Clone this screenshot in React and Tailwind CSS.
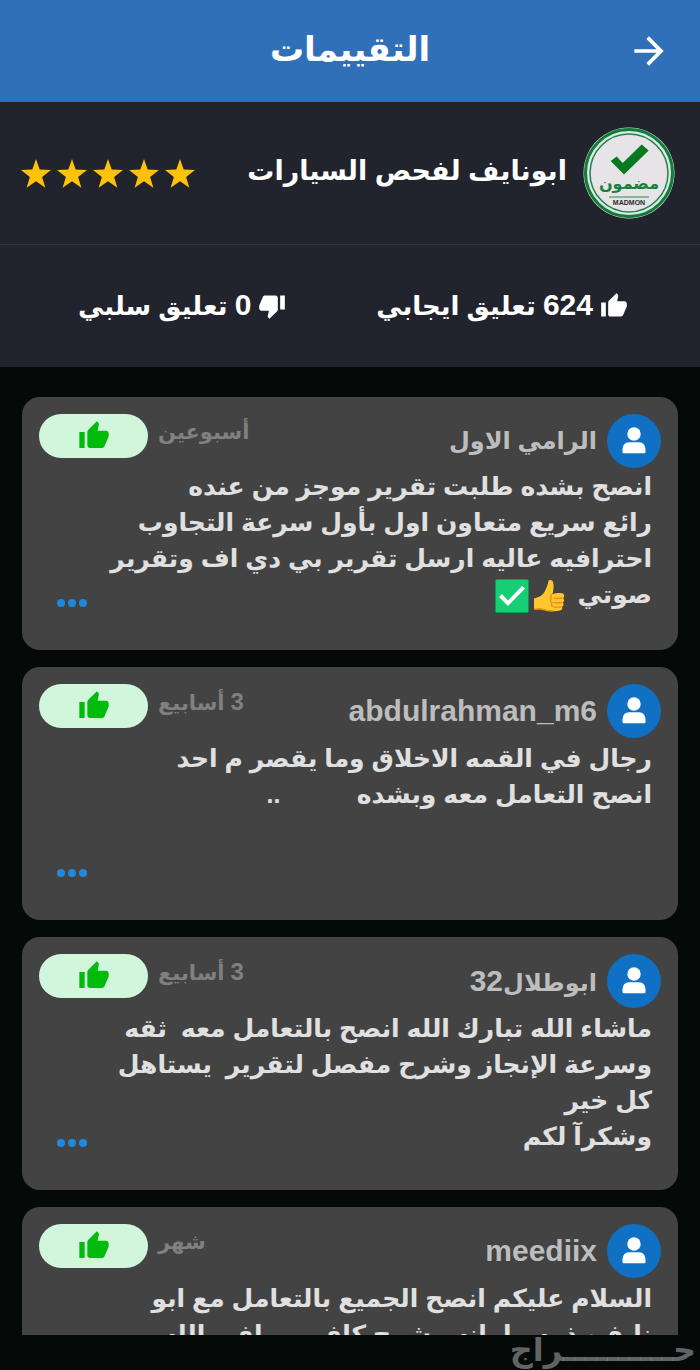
import { MdArrowForward, MdThumbDown, MdThumbUp } from 'react-icons/md'

const reviews = [
  {
    id: 1,
    name: 'الرامي الاول',
    time: 'أسبوعين',
    lines: [
      'انصح بشده طلبت تقرير موجز من عنده',
      'رائع سريع متعاون اول بأول سرعة التجاوب',
      'احترافيه عاليه ارسل تقرير بي دي اف وتقرير',
      'صوتي',
    ],
    emojis: true,
  },
  {
    id: 2,
    name: 'abdulrahman_m6',
    time: '3 أسابيع',
    lines: [
      'رجال في القمه الاخلاق وما يقصر م احد',
      'انصح التعامل معه وبشده           ..',
    ],
  },
  {
    id: 3,
    name: 'ابوطلال32',
    time: '3 أسابيع',
    lines: [
      'ماشاء الله تبارك الله انصح بالتعامل معه  ثقه',
      'وسرعة الإنجاز وشرح مفصل لتقرير  يستاهل',
      'كل خير',
      'وشكرآ لكم',
    ],
  },
  {
    id: 4,
    name: 'meediix',
    time: 'شهر',
    lines: [
      'السلام عليكم انصح الجميع بالتعامل مع ابو',
      'نايف، ذمه وامانه وشرح كافي ووافي الله',
    ],
  },
]

// Latin letters and digits are set larger than the Arabic around them
function MixedText({ text, latinClass }) {
  return text.split(/([\w]+)/).map((part, i) =>
    i % 2 === 1 ? (
      <span key={i} className={latinClass}>
        {part}
      </span>
    ) : (
      part
    )
  )
}

function MadmonLogo() {
  return (
    <svg viewBox="0 0 92 92" className="size-[92px] shrink-0" role="img" aria-label="مضمون">
      <circle cx="46" cy="46" r="45.500" fill="#d5efdf" />
      <circle cx="46" cy="46" r="43.500" fill="none" stroke="#167a3c" strokeWidth="3" />
      <circle cx="46" cy="46" r="39" fill="#e6e4e6" stroke="#2c7c52" strokeWidth="1.500" />
      <path d="M27.700 34l6-4.500 6 6.500 19-18.500 7 6-24.700 24z" fill="#08791f" />
      <text
        x="46"
        y="62"
        textAnchor="middle"
        direction="rtl"
        fill="#16803c"
        className="font-['DejaVu_Sans',sans-serif] text-[16px] font-bold"
      >
        مضمون
      </text>
      <path d="M26 70h40" stroke="#2c8a50" strokeWidth="1" />
      <text
        x="46"
        y="78"
        textAnchor="middle"
        fill="#2a2a2a"
        className="font-['Liberation_Sans',sans-serif] text-[7px] font-bold"
      >
        MADMON
      </text>
    </svg>
  )
}

function Star() {
  return (
    <svg viewBox="0 0 30 29" className="w-[30px]" aria-hidden="true">
      <path
        d="M15 0l3.700 10.600 11.300.4-8.900 6.900 3.300 10.800L15 22.300l-9.400 6.400 3.300-10.800L0 11l11.300-.4z"
        fill="#ffc10a"
      />
    </svg>
  )
}

function Avatar() {
  return (
    <span className="flex size-[54px] shrink-0 items-center justify-center rounded-full bg-[#1070c4]">
      <svg viewBox="0 0 24 28" className="w-6" fill="#fff" aria-hidden="true">
        <circle cx="12" cy="7" r="6.700" />
        <path d="M.5 23.500C.5 18 3 15.200 7 15.200h10c4 0 6.500 2.800 6.500 8.300v1.500q0 1.200-1.200 1.200H1.700Q.5 26.200.5 25z" />
      </svg>
    </span>
  )
}

function Emojis() {
  return (
    <span className="ms-3 inline-flex h-[34px] gap-1 align-middle">
      <svg viewBox="0 0 32 34" className="w-8" role="img" aria-label="👍">
        <path
          d="M1 19.500c5-1.500 9-3 11-7.500 1.500-3.500 3-6.500 3.500-10C16 .5 19 .5 20 3c1.200 3.500.6 8-.5 12 3-1.200 9-1.500 10.500-.5 1.800 1.300 1.500 3.700 0 4.500 1.500 1.200 1.300 3.700-.2 4.500 1.200 1.300 1 3.500-.8 4.300.8 1.700 0 3.500-2 3.800-4 .8-10 .8-14-.6-3-1-5-1.500-7-1.200-2 .2-4 .2-5 .2z"
          fill="#ffc62e"
        />
        <path
          d="M29.500 19c-3 .6-6 .6-9 .2M29.500 23.500c-3 .6-6 .6-9 .2M28.500 27.800c-3 .4-5 .4-8 .2M19.500 15c-2 1-2.500 3-1 4.500-1.500 1.500-1 3.500.5 4.300-1 1.500-.5 3.500 1 4.200"
          fill="none"
          stroke="#e8901c"
          strokeWidth="1.300"
        />
        <path d="M1 30c3 .5 5-.5 8 .4 3 1 7 1.700 11 1.600" fill="none" stroke="#e8901c" strokeWidth="1.500" />
      </svg>
      <svg viewBox="0 0 34 34" className="w-[34px]" role="img" aria-label="✅">
        <rect x=".5" y=".5" width="33" height="33" rx="1.500" fill="#16cf74" stroke="#0b9a52" />
        <path d="M4 18l3-3 6 6.500L27 7l3 2.500L13 27z" fill="#fff" />
      </svg>
    </span>
  )
}

function ReviewCard({ name, time, lines, emojis }) {
  return (
    <li className="flex min-h-[253px] shrink-0 flex-col rounded-[18px] bg-[#434343] px-[17px] pt-[17px]">
      <div className="flex items-start gap-[10px]">
        <Avatar />
        <h2 className="flex-1 text-2xl leading-[54px] text-[#bdbdbd]">
          <MixedText text={name} latinClass="text-[30px]" />
        </h2>
        <time className="text-[21px] leading-9 text-[#808080]">
          <MixedText text={time} latinClass="text-2xl leading-9" />
        </time>
        <span className="flex h-11 w-[109px] items-center justify-center rounded-full bg-[#d2f6dc]">
          <MdThumbUp className="size-8 text-[#00bb0c]" aria-label="إيجابي" />
        </span>
      </div>
      <div className="flex flex-1 items-end justify-between px-[9px]">
        <div className="self-start text-[25px] leading-9 whitespace-pre text-[#e0e0e0]">
          {lines.map((line, i) => (
            <p key={line}>
              {line}
              {emojis && i === lines.length - 1 && <Emojis />}
            </p>
          ))}
        </div>
        <button type="button" aria-label="المزيد" className="mb-[39px] flex gap-[3px] px-[9px] py-1">
          <span className="size-2 rounded-full bg-[#2088dc]" />
          <span className="size-2 rounded-full bg-[#2088dc]" />
          <span className="size-2 rounded-full bg-[#2088dc]" />
        </button>
      </div>
    </li>
  )
}

export default function App() {
  return (
    <div
      dir="rtl"
      className="flex h-screen flex-col bg-[#050908] font-['Liberation_Sans','DejaVu_Sans',sans-serif] font-bold text-white"
    >
      <header className="grid h-[102px] shrink-0 grid-cols-[1fr_auto_1fr] items-center bg-[#3070b9] px-[29px]">
        <button type="button" aria-label="رجوع" className="justify-self-start">
          <MdArrowForward className="size-11" />
        </button>
        <h1 className="pb-1 text-[34px] leading-10">التقييمات</h1>
      </header>

      <section className="shrink-0 bg-[#21232d]">
        <div className="flex h-[143px] items-center gap-4 border-b border-[#363841] ps-[25px] pe-[21px]">
          <MadmonLogo />
          <p className="flex-1 pb-1 text-[27px] leading-10 whitespace-nowrap">ابونايف لفحص السيارات</p>
          <div className="flex gap-[6px]" role="img" aria-label="5 نجوم">
            <Star />
            <Star />
            <Star />
            <Star />
            <Star />
          </div>
        </div>
        <div className="flex h-[122px] items-center justify-between ps-[72px] pe-[78px]">
          <p className="flex items-center gap-[7px] text-[26px] whitespace-nowrap">
            <MdThumbUp className="size-7" />
            <span className="pb-1">
              <MixedText text="624 تعليق ايجابي" latinClass="text-[30px]" />
            </span>
          </p>
          <p className="flex items-center gap-[7px] text-[26px] whitespace-nowrap">
            <MdThumbDown className="size-7" />
            <span className="pb-1">
              <MixedText text="0 تعليق سلبي" latinClass="text-[30px]" />
            </span>
          </p>
        </div>
      </section>

      <main className="min-h-0 flex-1 overflow-hidden px-[22px] pt-[30px]">
        <ul className="flex flex-col gap-[17px]">
          {reviews.map((review) => (
            <ReviewCard key={review.id} {...review} />
          ))}
        </ul>
      </main>

      <footer className="relative h-[35px] shrink-0">
        <span className="absolute right-1 bottom-0 text-[32px] leading-[40px] text-[#8a8e8e]/70">
          حــــــــــراج
        </span>
      </footer>
    </div>
  )
}
